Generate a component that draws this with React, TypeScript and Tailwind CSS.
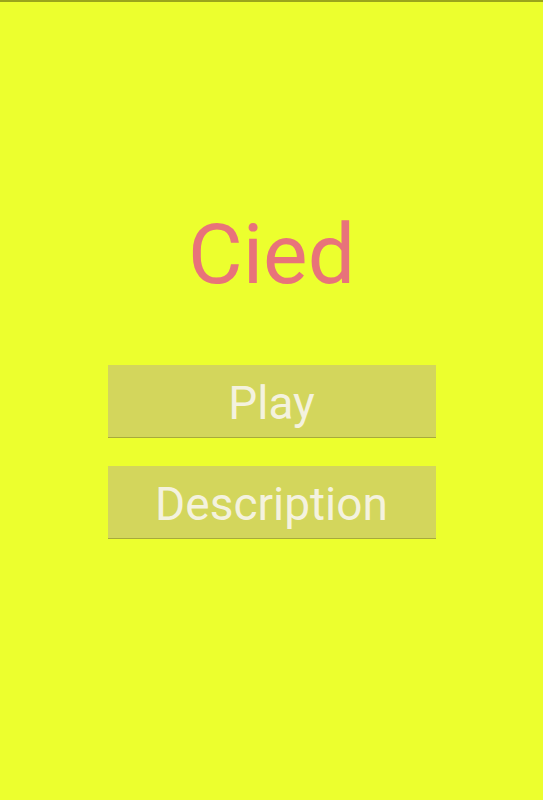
export default function App() {
  return (
    <main
      className="h-[800px] w-full bg-[#ecff2e] border-t-2 border-[#9aa51c] flex flex-col items-center"
      style={{ fontFamily: "Roboto, 'Liberation Sans', sans-serif" }}
    >
      <h1 className="mt-[211px] text-[84px] leading-[84px] text-[#e8737a] font-normal">Cied</h1>
      <div className="mt-[68px] flex flex-col gap-[29px]">
        <button className="w-[328px] h-[72px] bg-[#d3d65c] shadow-[0_1px_0_#a8ab3a] text-[#f4f2de] text-[46px] leading-none pt-[4px]">
          Play
        </button>
        <button className="w-[328px] h-[72px] bg-[#d3d65c] shadow-[0_1px_0_#a8ab3a] text-[#f4f2de] text-[46px] leading-none pt-[4px]">
          Description
        </button>
      </div>
    </main>
  );
}
